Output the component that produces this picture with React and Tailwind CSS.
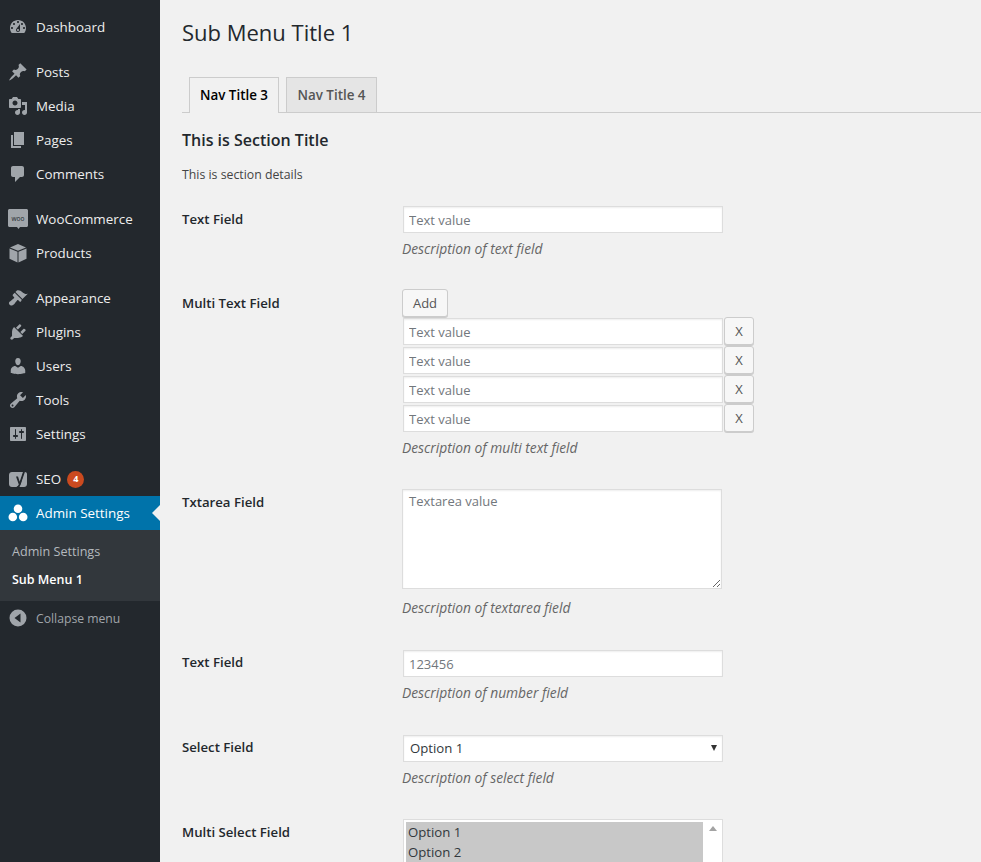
const FONT = "font-['Open_Sans',sans-serif]"

const icons = {
  dashboard: <path d="M3.76 16h12.48c1.1-1.37 1.76-3.11 1.76-5 0-4.42-3.58-8-8-8s-8 3.58-8 8c0 1.89.66 3.63 1.76 5zM10 4c.55 0 1 .45 1 1s-.45 1-1 1-1-.45-1-1 .45-1 1-1zM6 6c.55 0 1 .45 1 1s-.45 1-1 1-1-.45-1-1 .45-1 1-1zm8 0c.55 0 1 .45 1 1s-.45 1-1 1-1-.45-1-1 .45-1 1-1zm-5.37 5.55L12 7v6c0 1.1-.9 2-2 2s-2-.9-2-2c0-.57.24-1.08.63-1.45zM4 10c.55 0 1 .45 1 1s-.45 1-1 1-1-.45-1-1 .45-1 1-1zm12 0c.55 0 1 .45 1 1s-.45 1-1 1-1-.45-1-1 .45-1 1-1zm-5 3c0-.55-.45-1-1-1s-1 .45-1 1 .45 1 1 1 1-.45 1-1z" fillRule="evenodd" />,
  posts: <path d="M10.44 3.02l1.82-1.82 6.36 6.35-1.83 1.82c-1.05-.68-2.48-.57-3.41.36l-.75.75c-.92.93-1.04 2.35-.35 3.41l-1.83 1.82-2.41-2.41-2.8 2.79c-.42.42-3.38 2.71-3.8 2.29s1.86-3.39 2.28-3.81l2.79-2.79L4.1 9.36l1.83-1.82c1.05.69 2.48.57 3.4-.36l.75-.75c.93-.92 1.05-2.35.36-3.41z" />,
  media: <path d="M13 11V4c0-.55-.45-1-1-1h-1.67L9 1H5L3.67 3H2c-.55 0-1 .45-1 1v7c0 .55.45 1 1 1h10c.55 0 1-.45 1-1zM7 4.5c1.38 0 2.5 1.12 2.5 2.5S8.38 9.5 7 9.5 4.5 8.38 4.5 7 5.62 4.5 7 4.5zM14 6h5v10.5c0 1.38-1.12 2.5-2.5 2.5S14 17.88 14 16.5s1.12-2.5 2.5-2.5c.17 0 .34.02.5.05V9h-3V6zm-4 8.05V13h2v3.5c0 1.38-1.12 2.5-2.5 2.5S7 17.88 7 16.5 8.12 14 9.5 14c.17 0 .34.02.5.05z" fillRule="evenodd" />,
  pages: <path d="M6 15V2h10v13H6zm-1 1h8v2H3V5h2v11z" />,
  comments: <path d="M5 2h9c1.1 0 2 .9 2 2v7c0 1.1-.9 2-2 2h-2l-5 5v-5H5c-1.1 0-2-.9-2-2V4c0-1.1.9-2 2-2z" />,
  woo: (
    <>
      <path d="M1.500 0h17c.8 0 1.500.7 1.500 1.500v15c0 .8-.7 1.500-1.500 1.500H12l-1.500 2-1.500-2H1.500C.7 18 0 17.300 0 16.500v-15C0 .7.7 0 1.500 0z" />
      <text x="10" y="11.500" textAnchor="middle" fontSize="6.500" fill="#23282d">woo</text>
    </>
  ),
  products: (
    <>
      <path d="M10 1l8 3.400-8 3.400-8-3.400z" />
      <path d="M1.500 5.400l8 3.400V19.500l-8-3.800zM18.500 5.400v10.300l-8 3.800V8.800z" />
    </>
  ),
  appearance: <path d="M14.48 11.06L7.41 3.99l1.5-1.5c.5-.56 2.3-.47 3.51.32 1.21.8 1.43 1.28 2.91 2.1 1.18.64 2.45 1.26 4.45.85zm-.71.71L6.7 4.7 4.93 6.47c-.39.39-.39 1.02 0 1.41l1.06 1.06c.39.39.39 1.03 0 1.42-.6.6-1.43 1.11-2.21 1.69-.35.26-.7.53-1.01.84C1.43 13.23.4 14.91 1.2 16.14c.25.38.68.81 1.13 1.06 1.23.8 2.91-.23 4.25-1.57.31-.31.58-.66.84-1.01.58-.78 1.09-1.61 1.69-2.21.39-.39 1.03-.39 1.42 0l1.06 1.06c.39.39 1.02.39 1.41 0z" />,
  plugins: <path d="M13.11 4.36L9.87 7.6 8 5.73l3.24-3.24c.35-.34 1.05-.2 1.56.32.52.51.66 1.21.31 1.55zm-8 1.77l.91-1.12 9.01 9.01-1.19.84c-.71.71-2.63 1.16-3.82 1.16H6.14L4.9 17.26c-.59.59-1.54.59-2.12 0-.59-.58-.59-1.53 0-2.12l1.24-1.24v-3.88c0-1.13.4-3.19 1.09-3.89zm7.26 3.97l3.24-3.24c.34-.35 1.04-.21 1.55.31.52.51.66 1.21.31 1.55l-3.24 3.25z" />,
  users: <path d="M10 9.25c-2.27 0-2.73-3.44-2.73-3.44C7 4.02 7.82 2 9.97 2c2.16 0 2.98 2.02 2.71 3.81 0 0-.41 3.44-2.68 3.44zm0 2.57L12.72 10c2.39 0 4.52 2.33 4.52 4.53v2.49s-3.65 1.13-7.24 1.13c-3.65 0-7.24-1.13-7.24-1.13v-2.49c0-2.25 1.94-4.48 4.47-4.48z" />,
  tools: <path d="M16.68 9.77c-1.34 1.34-3.3 1.67-4.95.99l-5.41 6.52c-.99.99-2.59.99-3.58 0s-.99-2.59 0-3.57l6.52-5.42c-.68-1.65-.35-3.61.99-4.95 1.28-1.28 3.12-1.62 4.72-1.06l-2.89 2.89 2.82 2.82 2.86-2.87c.53 1.58.18 3.39-1.08 4.65zM3.81 16.21c.4.39 1.04.39 1.43 0 .4-.4.4-1.04 0-1.43-.39-.4-1.03-.4-1.43 0-.39.39-.39 1.03 0 1.43z" fillRule="evenodd" />,
  settings: <path d="M18 16V4c0-.55-.45-1-1-1H3c-.55 0-1 .45-1 1v12c0 .55.45 1 1 1h14c.55 0 1-.45 1-1zM8 11h1c.55 0 1 .45 1 1s-.45 1-1 1H8v1.500c0 .28-.22.5-.5.5s-.5-.22-.5-.5V13H6c-.55 0-1-.45-1-1s.45-1 1-1h1V5.500c0-.28.22-.5.5-.5s.5.22.5.5V11zm5-2h-1c-.55 0-1-.45-1-1s.45-1 1-1h1V5.500c0-.28.22-.5.5-.5s.5.22.5.5V7h1c.55 0 1 .45 1 1s-.45 1-1 1h-1v5.500c0 .28-.22.5-.5.5s-.5-.22-.5-.5V9z" fillRule="evenodd" />,
  seo: (
    <>
      <path d="M4 3h11.500L12 13.500c-.6 1.800-1.500 3.500-3 4.500H4c-1.700 0-3-1.300-3-3V6c0-1.700 1.300-3 3-3z" />
      <path d="M16 3h1c1.100 0 2 .9 2 2v10c0 1.700-1.300 3-3 3h-5c.8-.9 1.500-2.300 2-3.800z" />
      <path d="M15.800.5h2L12.300 16c-.8 2.200-2 3.200-4 3.500v-1.600c1.200-.3 2-.9 2.500-2.300L8 7.500h2l1.700 5.200z" fill="#23282d" />
    </>
  ),
  admin: (
    <>
      <circle cx="10" cy="5.800" r="4.300" />
      <circle cx="4.800" cy="14" r="4.300" />
      <circle cx="15.200" cy="14" r="4.300" />
    </>
  ),
  collapse: <path d="M10 1.500a8.500 8.500 0 1 1 0 17 8.500 8.500 0 0 1 0-17zM12.500 5.500L6.500 10l6 4.500z" fillRule="evenodd" />,
}

const menuGroups = [
  [['dashboard', 'Dashboard']],
  [['posts', 'Posts'], ['media', 'Media'], ['pages', 'Pages'], ['comments', 'Comments']],
  [['woo', 'WooCommerce'], ['products', 'Products']],
  [['appearance', 'Appearance'], ['plugins', 'Plugins'], ['users', 'Users'], ['tools', 'Tools'], ['settings', 'Settings']],
]

function Icon({ name, className }) {
  return (
    <svg viewBox="0 0 20 20" fill="currentColor" className={`w-5 h-5 shrink-0 ${className}`}>
      {icons[name]}
    </svg>
  )
}

function MenuItem({ icon, label, children }) {
  return (
    <div className="h-[34px] flex items-center pl-[8px] text-[13.4px] text-[#eeeeee]">
      <Icon name={icon} className="text-[#a0a5aa] mr-[8px]" />
      <span>{label}</span>
      {children}
    </div>
  )
}

function Sidebar() {
  return (
    <aside className="w-[160px] shrink-0 bg-[#23282d] pt-[10px]">
      {menuGroups.map(group => (
        <div key={group[0][1]} className="mb-[11px]">
          {group.map(([icon, label]) => <MenuItem key={label} icon={icon} label={label} />)}
        </div>
      ))}
      <MenuItem icon="seo" label="SEO">
        <span className="ml-[6px] w-[17px] h-[17px] rounded-full bg-[#ca4a1f] text-white text-[9px] font-bold flex items-center justify-center">4</span>
      </MenuItem>
      <div className="relative h-[34px] flex items-center pl-[8px] bg-[#0073aa] text-white text-[13.4px]">
        <Icon name="admin" className="text-white mr-[8px]" />
        <span>Admin Settings</span>
        <span className="absolute right-0 top-[9px] border-y-[8px] border-r-[8px] border-y-transparent border-r-[#f1f1f1]" />
      </div>
      <div className="bg-[#32373c] h-[71px] pt-[8px] pl-[12px]">
        <div className="h-[28px] flex items-center text-[12.6px] text-[#b4b9be]">Admin Settings</div>
        <div className="h-[28px] flex items-center text-[12.5px] text-white font-semibold">Sub Menu 1</div>
      </div>
      <div className="h-[34px] flex items-center pl-[8px] text-[12.2px] text-[#a0a5aa]">
        <Icon name="collapse" className="mr-[8px]" />
        <span className="pt-[2px]">Collapse menu</span>
      </div>
    </aside>
  )
}

const inputClass = 'block h-[27px] w-[320px] ml-px bg-white border border-[#dddddd] shadow-[inset_0_1px_2px_rgba(0,0,0,0.07)] px-[5px] text-[13px] outline-none placeholder:text-[#72777c]'
const buttonClass = 'h-[28px] pt-[2px] bg-[#f7f7f7] border border-[#cccccc] rounded-[3px] shadow-[0_1px_0_#cccccc] text-[13px] text-[#555555]'

function Field({ label, labelClass, desc, descClass, rowClass, children }) {
  return (
    <div className={`grid grid-cols-[220px_1fr] ${rowClass}`}>
      <div className={`text-[13.2px] font-semibold text-[#23282d] leading-[20px] ${labelClass}`}>{label}</div>
      <div>
        {children}
        {desc && <p className={`text-[13.8px] italic text-[#666666] leading-[20px] ${descClass}`}>{desc}</p>}
      </div>
    </div>
  )
}

function MultiRow() {
  return (
    <div className="flex items-start gap-px h-[29px]">
      <input className={`${inputClass} mt-px`} placeholder="Text value" readOnly />
      <button className={`${buttonClass} w-[30px]`}>X</button>
    </div>
  )
}

export default function App() {
  return (
    <div className={`flex h-screen overflow-hidden bg-[#f1f1f1] ${FONT}`}>
      <Sidebar />
      <main className="flex-1 pl-[22px] min-w-0">
        <h1 className="text-[22px] text-[#23282d] leading-[29px] pt-[18px]">Sub Menu Title 1</h1>

        {/* Tabs */}
        <div className="flex gap-[7px] pl-[7px] mt-[30px] border-b border-[#cccccc] h-[36px]">
          <div className="w-[90px] h-[36px] pb-px bg-[#f1f1f1] border border-[#cccccc] border-b-0 text-[13.4px] font-semibold text-black flex items-center justify-center">Nav Title 3</div>
          <div className="w-[91px] h-[35px] bg-[#e5e5e5] border border-[#cccccc] border-b-0 text-[13.4px] font-semibold text-[#555555] flex items-center justify-center">Nav Title 4</div>
        </div>

        <h2 className="text-[16px] font-semibold text-[#23282d] leading-[22px] mt-[16px]">This is Section Title</h2>
        <p className="text-[12.3px] text-[#444444] leading-[20px] mt-[14px]">This is section details</p>

        <div className="mt-[21px]">
          <Field label="Text Field" labelClass="pt-[3px]" desc="Description of text field" descClass="mt-[6px]" rowClass="mb-[30px]">
            <input className={inputClass} placeholder="Text value" readOnly />
          </Field>
          <Field label="Multi Text Field" labelClass="pt-[4px]" desc="Description of multi text field" descClass="mt-[5px]" rowClass="mb-[31px]">
            <button className={`${buttonClass} w-[46px] block`}>Add</button>
            {[1, 2, 3, 4].map(i => <MultiRow key={i} />)}
          </Field>
          <Field label="Txtarea Field" labelClass="pt-[3px]" desc="Description of textarea field" descClass="mt-[9px]" rowClass="mb-[32px]">
            <textarea className="block w-[320px] h-[100px] bg-white border border-[#dddddd] shadow-[inset_0_1px_2px_rgba(0,0,0,0.07)] px-[6px] py-[2px] text-[13px] outline-none placeholder:text-[#72777c]" placeholder="Textarea value" readOnly />
          </Field>
          <Field label="Text Field" labelClass="pt-[2px]" desc="Description of number field" descClass="mt-[6px]" rowClass="mb-[32px]">
            <input className={inputClass} placeholder="123456" readOnly />
          </Field>
          <Field label="Select Field" labelClass="pt-[2px]" desc="Description of select field" descClass="mt-[6px]" rowClass="mb-[31px]">
            <div className="relative w-[320px] ml-px">
              <select className="block appearance-none w-full h-[27px] bg-white border border-[#dddddd] shadow-[inset_0_1px_2px_rgba(0,0,0,0.07)] px-[6px] text-[13.2px] text-[#32373c] outline-none">
                <option>Option 1</option>
                <option>Option 2</option>
              </select>
              <span className="absolute right-[6px] top-[10px] border-x-[3.5px] border-t-[6px] border-x-transparent border-t-[#333333]" />
            </div>
          </Field>
          <Field label="Multi Select Field" labelClass="pt-[3px]">
            <div className="flex w-[320px] h-[100px] ml-px bg-white border border-[#dddddd] pt-[2px] pl-[2px]">
              <div className="w-[297px] text-[13.2px] text-[#32373c]">
                {['Option 1', 'Option 2'].map(o => (
                  <div key={o} className="h-[20px] bg-[#c8c8c8] px-[2px] leading-[20px]">{o}</div>
                ))}
              </div>
              <div className="flex-1 flex justify-center pt-[4px]">
                <span className="h-0 border-x-[4px] border-b-[5px] border-x-transparent border-b-[#a3a3a3]" />
              </div>
            </div>
          </Field>
        </div>
      </main>
    </div>
  )
}
